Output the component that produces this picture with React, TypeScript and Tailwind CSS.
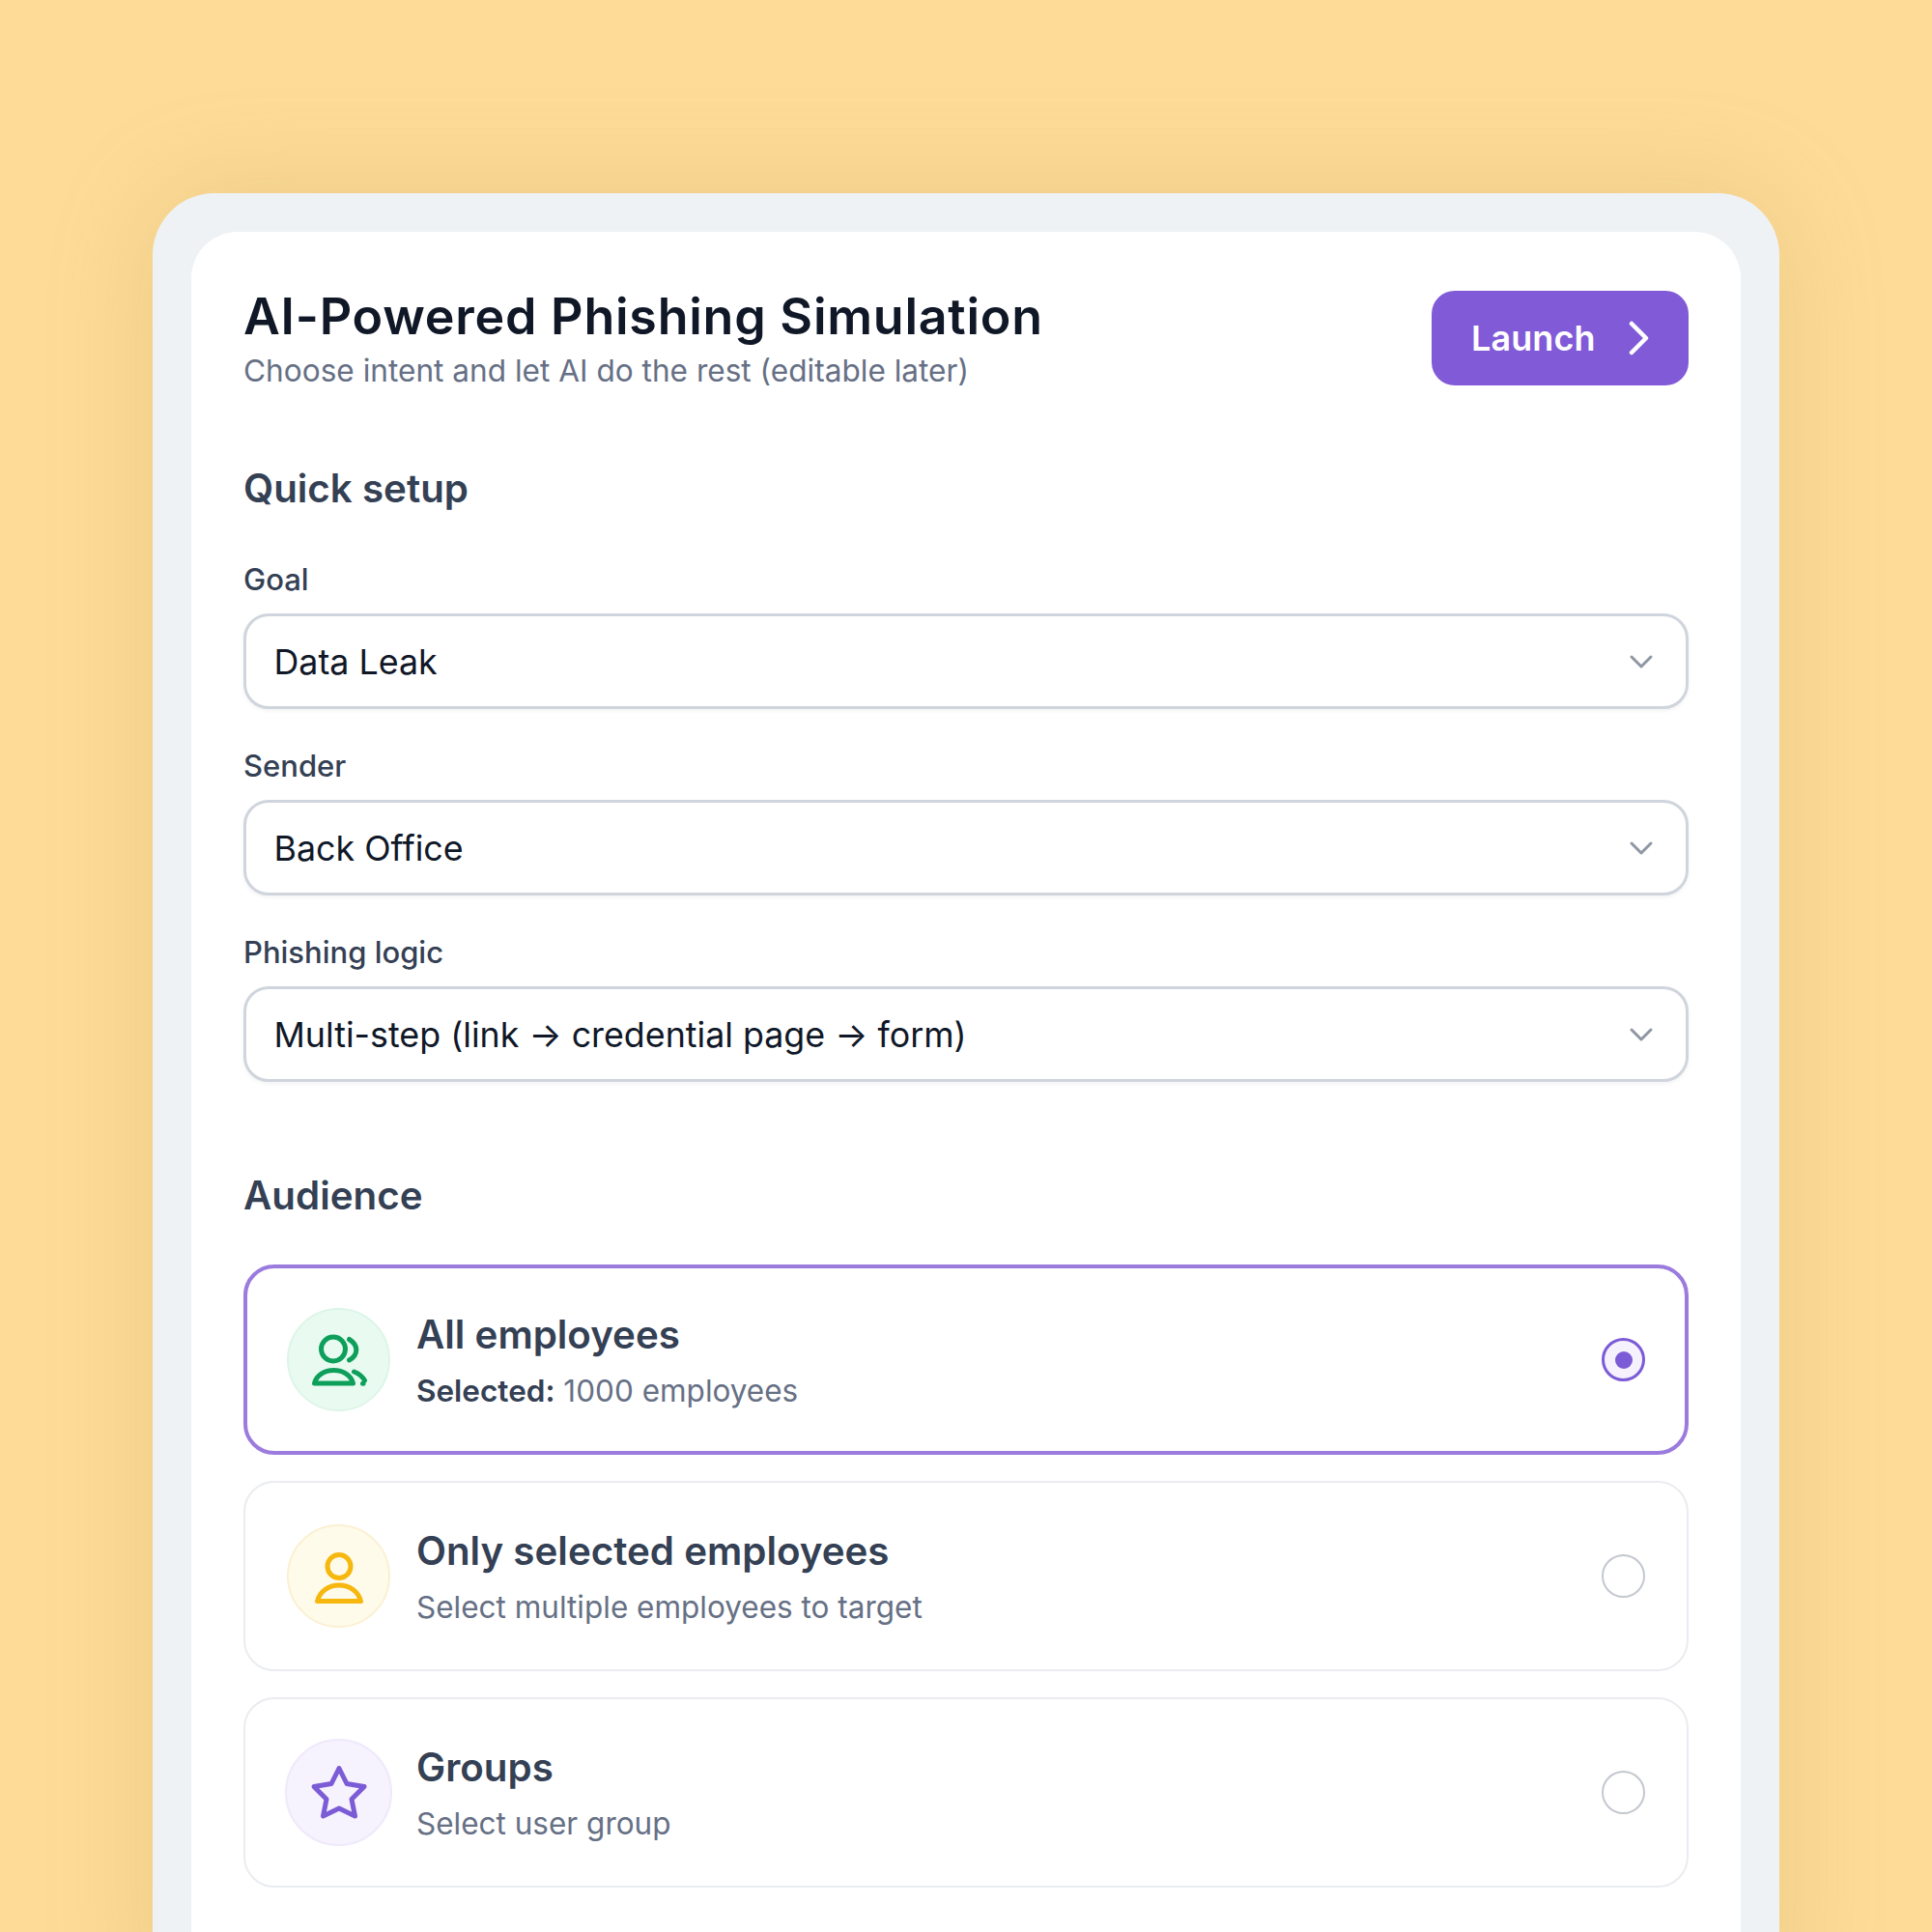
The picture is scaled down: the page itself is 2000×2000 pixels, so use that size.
import React from "react";

const inter = "[font-family:Inter,'Liberation_Sans',sans-serif]";

function Chevron() {
  return (
    <svg width="26" height="16" viewBox="0 0 26 16" fill="none" className="shrink-0">
      <path d="M3 3L13 13L23 3" stroke="#8E97A3" strokeWidth="3" strokeLinecap="round" strokeLinejoin="round" />
    </svg>
  );
}

function Field({ label, value }: { label: string; value: string }) {
  return (
    <div>
      <div className="h-[36px] leading-[36px] text-[31px] font-medium text-[#344054] mb-[17px]">{label}</div>
      <div className="h-[99px] rounded-[26px] border-[3px] border-[#D0D5DD] bg-white flex items-center justify-between pl-[28.5px] pr-[33px] shadow-[0_2px_4px_rgba(16,24,40,0.05)]">
        <span className="pt-[2px] text-[35.8px] text-[#101828]">{value}</span>
        <Chevron />
      </div>
    </div>
  );
}

function UsersIcon() {
  return (
    <svg width="64" height="64" viewBox="0 0 64 64" fill="none" stroke="#0E9F5B" strokeWidth="5" strokeLinecap="round" strokeLinejoin="round">
      <circle cx="26" cy="20.5" r="12.5" />
      <path d="M42.5 10.5Q49.8 15 49.8 21.5Q49.8 28 42.5 32" />
      <path d="M6.5 56C8.5 47.5 17 42.5 26.5 42.5C36 42.5 44.5 47.5 46.5 56Z" />
      <path d="M47.5 44Q55 47 58.5 53" />
      <path d="M56.5 56.3L57 56.3" />
    </svg>
  );
}

function UserIcon() {
  return (
    <svg width="64" height="64" viewBox="0 0 64 64" fill="none" stroke="#F6B70E" strokeWidth="5" strokeLinecap="round" strokeLinejoin="round">
      <circle cx="32" cy="21.5" r="12" />
      <path d="M9.5 57.5C12 47.5 21 41 32 41C43 41 52 47.5 54.5 57.5Z" />
    </svg>
  );
}

function StarIcon() {
  return (
    <svg width="64" height="64" viewBox="0 0 64 64" fill="none" stroke="#7C5BD6" strokeWidth="5" strokeLinecap="round" strokeLinejoin="round">
      <path d="M32 6.5L40 22.5L58 25.5L45 38.5L48.5 56L32 48L15.5 56L19 38.5L6 25.5L24 22.5Z" />
    </svg>
  );
}

function Card({
  icon,
  circle,
  title,
  sub,
  selected,
}: {
  icon: React.ReactNode;
  circle: string;
  title: string;
  sub: React.ReactNode;
  selected?: boolean;
}) {
  return (
    <div
      className={
        selected
          ? "h-[197px] rounded-[32px] border-[4px] border-[#9B7BDD] bg-white flex items-center pl-[39px] pr-[41px]"
          : "h-[197px] rounded-[32px] border-[2px] border-[#EAECF0] bg-white flex items-center pl-[41px] pr-[43px]"
      }
    >
      <div className="w-[111px] flex justify-center shrink-0">
        <div className={circle}>{icon}</div>
      </div>
      <div className="ml-[25px] pt-[2px] flex-1 min-w-0">
        <div className="h-[48px] leading-[48px] text-[40.3px] font-semibold text-[#344054]">{title}</div>
        <div className="mt-[14px] h-[40px] leading-[40px] text-[31.5px] text-[#667085]">{sub}</div>
      </div>
      {selected ? (
        <div className="w-[45px] h-[45px] rounded-full border-[3px] border-[#7C5BD6] bg-[#F5F1FD] flex items-center justify-center shrink-0">
          <div className="w-[18px] h-[18px] rounded-full bg-[#7C5BD6]" />
        </div>
      ) : (
        <div className="w-[45px] h-[45px] rounded-full border-[2px] border-[#C4C8CF] bg-white shrink-0" />
      )}
    </div>
  );
}

export default function App() {
  return (
    <div className={`w-[2000px] h-[2000px] overflow-hidden bg-[#FEDC98] pt-[200px] px-[158px] ${inter}`}>
      <div className="h-[1900px] rounded-[64px] bg-[#EEF2F5] pt-[40px] px-[40px] shadow-[0_0_110px_rgba(165,140,70,0.22)]">
        <div className="h-full rounded-[48px] bg-white px-[54px] pt-[60px]">
          <div className="flex items-start justify-between">
            <div>
              <div className="h-[56px] leading-[56px] text-[52px] font-semibold text-[#101828] tracking-[0.75px]">AI-Powered Phishing Simulation</div>
              <div className="mt-[8px] h-[40px] leading-[40px] text-[31.6px] text-[#667085]">Choose intent and let AI do the rest (editable later)</div>
            </div>
            <button className="mt-[1px] w-[266px] h-[98px] rounded-[24px] bg-[#815BD7] text-white flex items-center pl-[41px]">
              <span className="text-[36px] font-semibold leading-none tracking-[0.1px]">Launch</span>
              <svg width="24" height="36" viewBox="0 0 24 36" fill="none" className="ml-[33px]">
                <path d="M4 3L19 18L4 33" stroke="white" strokeWidth="4.5" strokeLinecap="round" strokeLinejoin="round" />
              </svg>
            </button>
          </div>

          <div className="mt-[78px] h-[48px] leading-[48px] text-[40.3px] font-semibold text-[#344054]">Quick setup</div>

          <div className="mt-[52px] flex flex-col gap-[41px]">
            <Field label="Goal" value="Data Leak" />
            <Field label="Sender" value="Back Office" />
            <Field label="Phishing logic" value="Multi-step (link → credential page → form)" />
          </div>

          <div className="mt-[94px] h-[48px] leading-[48px] text-[40.3px] font-semibold text-[#344054]">Audience</div>

          <div className="mt-[47px] flex flex-col gap-[27px]">
            <Card
              selected
              icon={<UsersIcon />}
              circle="w-[107px] h-[107px] rounded-full bg-[#E9FBF1] border-[2px] border-[#DDF5E7] flex items-center justify-center"
              title="All employees"
              sub={
                <>
                  <span className="font-semibold text-[#344054]">Selected:</span> 1000 employees
                </>
              }
            />
            <Card
              icon={<UserIcon />}
              circle="w-[107px] h-[107px] rounded-full bg-[#FFFBEB] border-[2px] border-[#FBF0D2] flex items-center justify-center"
              title="Only selected employees"
              sub="Select multiple employees to target"
            />
            <Card
              icon={<StarIcon />}
              circle="w-[111px] h-[111px] rounded-full bg-[#F6F2FE] border-[2px] border-[#EFE9FB] flex items-center justify-center"
              title="Groups"
              sub="Select user group"
            />
          </div>
        </div>
      </div>
    </div>
  );
}
